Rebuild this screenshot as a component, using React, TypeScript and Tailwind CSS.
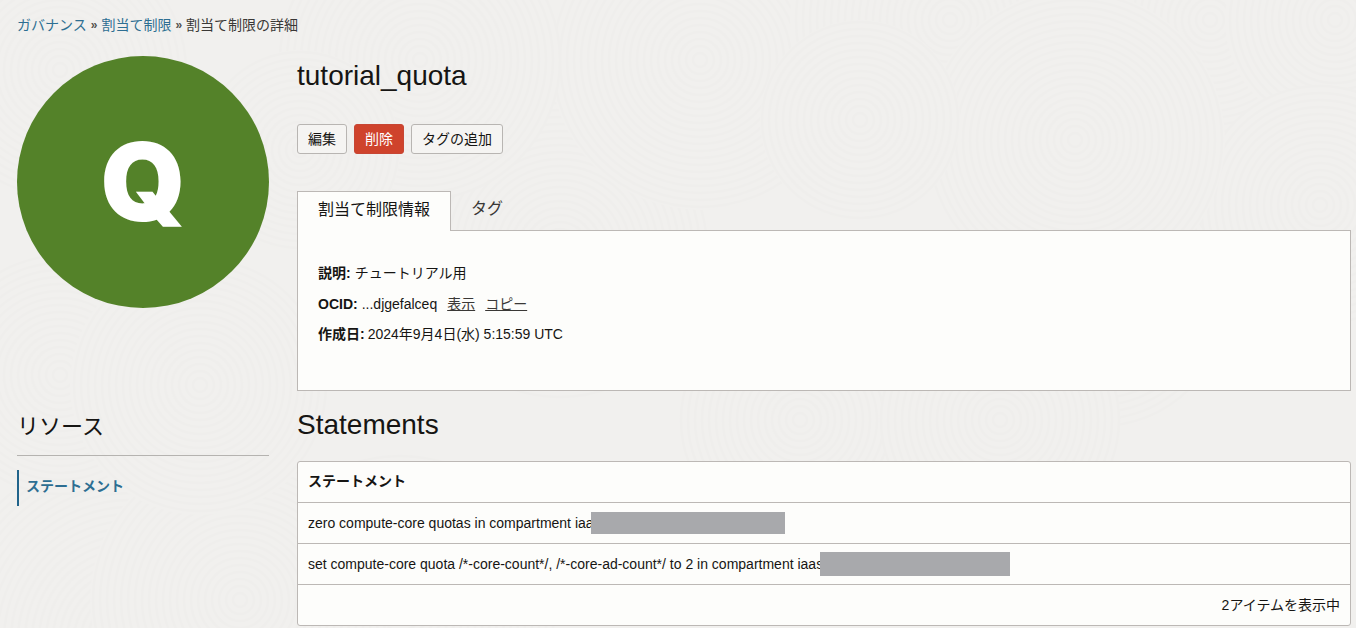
// overlapping whorls, painted back to front
const whorls = [
  { cx: 1100, cy: 300, r: 130 },
  { cx: 560, cy: 250, r: 150 },
  { cx: 700, cy: 60, r: 150 },
  { cx: 420, cy: 60, r: 140 },
  { cx: 1210, cy: 20, r: 130 },
  { cx: 1335, cy: 20, r: 110 },
  { cx: 1320, cy: 205, r: 120 },
  { cx: 950, cy: 20, r: 160 },
  { cx: 1075, cy: 140, r: 150 },
  { cx: 130, cy: 640, r: 190 },
  { cx: 400, cy: 610, r: 160 },
  { cx: 240, cy: 600, r: 150 },
  { cx: 60, cy: 375, r: 120 },
  { cx: 200, cy: 385, r: 130 },
  { cx: 60, cy: 70, r: 130 },
  { cx: 300, cy: 150, r: 100 },
  { cx: 860, cy: 120, r: 100 },
  { cx: 800, cy: 420, r: 120 },
  { cx: 1000, cy: 420, r: 120 },
];

function Texture() {
  return (
    <svg className="absolute inset-0 h-full w-full" viewBox="0 0 1356 628" aria-hidden="true">
      {whorls.map(({ cx, cy, r }, index) => (
        <g key={index} fill="none" stroke="#efeeec" strokeWidth="2.5">
          <circle cx={cx} cy={cy} r={r} fill="#f1f0ee" stroke="none" />
          {Array.from({ length: Math.floor(r / 7) }, (_, ring) => (
            <circle key={ring} cx={cx} cy={cy} r={(ring + 1) * 7} />
          ))}
        </g>
      ))}
    </svg>
  );
}

function ActionButton({ label, danger, width }: { label: string; danger?: boolean; width: string }) {
  return (
    <button
      className={
        danger
          ? `h-[30px] ${width} rounded-[3px] border border-[#c74634] bg-[#cf432c] text-[14px] text-white`
          : `h-[30px] ${width} rounded-[3px] border border-[#b8b5b2] bg-[#f5f4f2] text-[14px] text-[#161513]`
      }
    >
      {label}
    </button>
  );
}

export default function App() {
  return (
    <div
      className="relative h-[628px] w-[1356px] overflow-hidden bg-[#f1f0ee] text-[#161513]"
      style={{ fontFamily: '"Liberation Sans", "Noto Sans CJK JP", sans-serif' }}
    >
      <Texture />

      <div className="relative pl-[17px] pr-[5px]">
        <nav className="flex h-[50px] items-center text-[14px]">
          <a className="text-[#2d6e92]">ガバナンス</a>
          <span className="mx-[4px] text-[12px] font-bold text-[#55524f]">»</span>
          <a className="text-[#2d6e92]">割当て制限</a>
          <span className="mx-[4px] text-[12px] font-bold text-[#55524f]">»</span>
          <span className="text-[#3a3836]">割当て制限の詳細</span>
        </nav>

        <div className="mt-[6px] flex gap-[28px]">
          <aside className="w-[252px] shrink-0">
            <div className="flex h-[252px] w-[252px] items-center justify-center rounded-full bg-[#548229]">
              <span className="font-['Inter'] text-[108px] leading-none font-black text-white">Q</span>
            </div>

            <h2 className="mt-[102px] h-[45px] text-[22px] leading-[34px] font-normal">リソース</h2>
            <div className="h-px bg-[#b5b3b0]" />
            <div className="mt-[14px] flex h-[36px] items-center border-l-2 border-[#20638a] pb-[3px] pl-[7px] text-[14px] font-bold text-[#2d6e92]">
              ステートメント
            </div>
          </aside>

          <main className="min-w-0 flex-1">
            <h1 className="flex h-[40px] items-center text-[28px] font-normal">tutorial_quota</h1>

            <div className="mt-[28px] flex gap-[7px]">
              <ActionButton label="編集" width="w-[50px]" />
              <ActionButton label="削除" width="w-[50px]" danger />
              <ActionButton label="タグの追加" width="w-[92px]" />
            </div>

            <div className="mt-[37px] flex h-[40px]">
              <div className="relative z-10 flex h-[40px] w-[154px] items-center justify-center border border-b-0 border-[#bcb8b5] bg-[#fdfdfb] pb-[3px] text-[16px]">
                割当て制限情報
              </div>
              <div className="flex h-[36px] w-[72px] items-center justify-center text-[16px] text-[#3a3836]">タグ</div>
            </div>

            <section className="-mt-px h-[161px] border border-[#bcb8b5] bg-[#fdfdfb] pl-[20px] pt-[27px] text-[14px]">
              <p className="flex h-[30px] items-center">
                <b className="mr-[4px]">説明:</b>
                チュートリアル用
              </p>
              <p className="flex h-[32px] items-center">
                <b className="mr-[4px]">OCID:</b>
                ...djgefalceq
                <a className="ml-[10px] text-[#3a3836] underline">表示</a>
                <a className="ml-[10px] text-[#3a3836] underline">コピー</a>
              </p>
              <p className="flex h-[29px] items-center">
                <b className="mr-[3px]">作成日:</b>
                2024年9月4日(水) 5:15:59 UTC
              </p>
            </section>

            <h2 className="mt-[14px] flex h-[40px] items-center text-[28px] font-normal">Statements</h2>

            <section className="mt-[16px] rounded-[3px] border border-[#bcb8b5] bg-[#fdfdfb] text-[14px]">
              <div className="flex h-[41px] items-center border-b border-[#bcb8b5] px-[10px] pb-[1px] font-bold">
                ステートメント
              </div>
              <div className="flex h-[41px] items-center border-b border-[#bcb8b5] px-[10px]">
                zero compute-core quotas in compartment iaa
                <span className="-ml-[3px] h-[22px] w-[194px] bg-[#a8a9ac]" />
              </div>
              <div className="flex h-[41px] items-center border-b border-[#bcb8b5] px-[10px]">
                set compute-core quota /*-core-count*/, /*-core-ad-count*/ to 2 in compartment iaas
                <span className="-ml-[3px] h-[24px] w-[190px] bg-[#a8a9ac]" />
              </div>
              <div className="flex h-[40px] items-center justify-end px-[10px]">2アイテムを表示中</div>
            </section>
          </main>
        </div>
      </div>
    </div>
  );
}
